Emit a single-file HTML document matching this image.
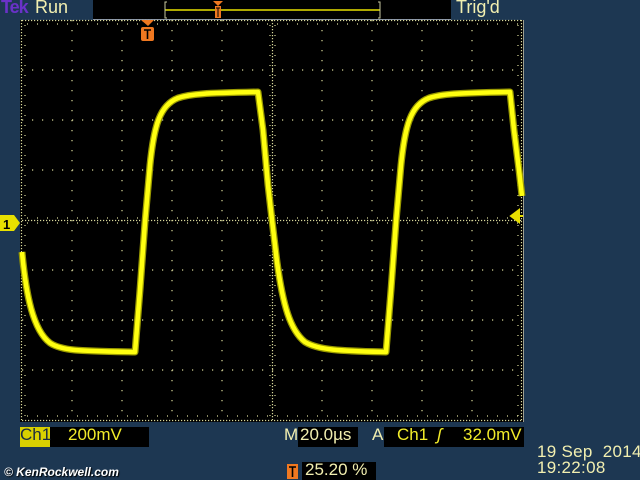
<!DOCTYPE html>
<html><head><meta charset="utf-8"><style>
html,body{margin:0;padding:0;}
body{width:640px;height:480px;background:#1d3752;position:relative;overflow:hidden;font-family:"Liberation Sans",sans-serif;}
.t{position:absolute;white-space:nowrap;}
.cream{color:#f2efb0;}
.yel{color:#f2ec2a;}
</style></head><body>
<div class="t" style="left:1px;top:-3px;font-size:18px;font-weight:bold;color:#6a32c8;letter-spacing:-1px;">Tek</div>
<div class="t cream" style="left:35px;top:-3px;font-size:18px;">Run</div>
<div class="t cream" style="left:456px;top:-3px;font-size:18px;">Trig'd</div>
<svg width="640" height="480" style="position:absolute;left:0;top:0">
 <rect x="93" y="0" width="358" height="19" fill="#000"/>
 <line x1="93" y1="19.5" x2="451" y2="19.5" stroke="#8a96a8"/>
 <line x1="165" y1="10" x2="380" y2="10" stroke="#e8e000" stroke-width="1.5"/>
 <path d="M167,2 H165 V18 H167 M378,2 H380 V18 H378" fill="none" stroke="#c8c8a0"/>
 <path d="M213,1 H223 L218,6 Z" fill="#f07820"/>
 <rect x="215" y="6" width="6" height="12" fill="#f07820"/>
 <path d="M216,8 H220 M218,8 V17" stroke="#000" stroke-width="1"/>
 <rect x="20" y="20" width="503" height="402" fill="#000"/>
 <line x1="523.5" y1="20" x2="523.5" y2="422" stroke="#a0a090"/>
 <g stroke="#d8d89a" stroke-width="1.2" fill="none">
  <g stroke-dasharray="1.2 8.8">
   <path d="M22,70H522M22,120H522M22,170H522M22,270H522M22,320H522M22,370H522"/>
   <path d="M72,20V420M122,20V420M172,20V420M222,20V420M322,20V420M372,20V420M422,20V420M472,20V420"/>
  </g>
  <g stroke-dasharray="1.2 1.8">
   <path d="M22,220.5H522M272.5,20V420"/>
  </g>
  <g stroke-dasharray="1.2 1.8">
   <path d="M22,20.5H522M22,420.5H522M21.5,20V420M521.5,20V420"/>
  </g>
  <g stroke-dasharray="1 9">
   <path d="M27,218H522M27,223H522M27,24H522M27,416H522"/>
   <path d="M270,25V420M275,25V420M25,25V420M518,25V420"/>
  </g>
 </g>
 <path d="M141,20 H154 L148,26 Z" fill="#f07820"/>
 <rect x="141" y="27" width="13" height="14" rx="2" fill="#f07820"/>
 <path d="M144,30 H151 M147.5,30 V39" stroke="#000" stroke-width="1.6"/>
 <g fill="none" stroke-linejoin="round">
 <path d="M22,252 C26,295 33,330 50,343 C62,351 80,351 135,352 L140,290 L145,222 L150,165 C154,125 160,105 178,98 C190,94 205,93 258,92 L263,130 L268,185 L272,220 L277,262 C283,305 290,330 305,342 C318,350 340,351 386,352 L391,290 L396,222 L401,165 C405,125 411,105 429,98 C441,94 456,93 510,92 L514,130 L519,170 L522,196"
  stroke="#9a9a00" stroke-width="7"/>
 <path d="M22,252 C26,295 33,330 50,343 C62,351 80,351 135,352 L140,290 L145,222 L150,165 C154,125 160,105 178,98 C190,94 205,93 258,92 L263,130 L268,185 L272,220 L277,262 C283,305 290,330 305,342 C318,350 340,351 386,352 L391,290 L396,222 L401,165 C405,125 411,105 429,98 C441,94 456,93 510,92 L514,130 L519,170 L522,196"
  stroke="#ffff10" stroke-width="4.5"/>
 </g>
 <path d="M0,215 H14 L20,223 L14,231 H0 Z" fill="#e8e000"/>
 <text x="3" y="229" font-family="Liberation Sans" font-weight="bold" font-size="13" fill="#000">1</text>
 <path d="M511,216 L519,210 V222 Z M517,216 H523" fill="#e8e000" stroke="#e8e000" stroke-width="2"/>
 <rect x="20" y="427" width="30" height="20" fill="#d8d000"/>
 <rect x="50" y="427" width="99" height="20" fill="#000"/>
 <rect x="298" y="427" width="60" height="20" fill="#000"/>
 <rect x="384" y="427" width="140" height="20" fill="#000"/>
 <rect x="302" y="462" width="74" height="18" fill="#000"/>
 <rect x="287" y="464" width="11" height="15" fill="#f07820"/>
 <path d="M289,467 H296 M292.5,467 V477" stroke="#000" stroke-width="1.6"/>
</svg>
<div class="t" style="left:20px;top:425px;font-size:17px;color:#1a2a40;">Ch1</div>
<div class="t yel" style="left:68px;top:425px;font-size:17px;">200mV</div>
<div class="t cream" style="left:284px;top:425px;font-size:17px;">M</div>
<div class="t cream" style="left:300px;top:425px;font-size:17px;">20.0µs</div>
<div class="t cream" style="left:372px;top:425px;font-size:17px;">A</div>
<div class="t yel" style="left:397px;top:425px;font-size:17px;">Ch1</div>
<div class="t yel" style="left:437px;top:425px;font-size:17px;font-style:italic;">ʃ</div>
<div class="t yel" style="left:463px;top:425px;font-size:17px;">32.0mV</div>
<div class="t cream" style="left:305px;top:460px;font-size:17px;">25.20 %</div>
<div class="t cream" style="left:537px;top:442px;font-size:17px;letter-spacing:0.3px;">19 Sep&nbsp; 2014</div>
<div class="t cream" style="left:537px;top:458px;font-size:17px;letter-spacing:0.3px;">19:22:08</div>
<div class="t" style="left:4px;top:465px;font-size:12px;font-weight:bold;font-style:italic;color:#fff;text-shadow:1px 1px 1px #000;">© KenRockwell.com</div>
</body></html>
